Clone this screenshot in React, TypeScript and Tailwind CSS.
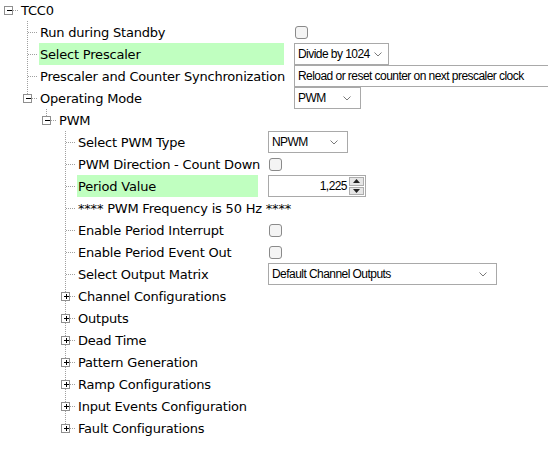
import React from 'react';

type Row = {
    level: number;
    label: string;
    kind: 'leaf' | 'open' | 'closed';
    hl?: boolean;
    ctrlX?: number;
    control?: React.ReactNode;
};

const LINE = '#a0a0a0';
const ctrlFont = { fontFamily: '"Liberation Sans", Arial, sans-serif', letterSpacing: '-0.55px' };

function Chevron() {
    return (
        <svg width="8" height="5" viewBox="0 0 8 5" className="shrink-0">
            <polyline points="0.5,0.5 4,4 7.5,0.5" fill="none" stroke="#7a7a7a" strokeWidth="1" />
        </svg>
    );
}

function Dropdown({ value, width }: { value: string; width: number }) {
    return (
        <div
            className="h-[22px] shrink-0 flex items-center justify-between gap-1 border border-[#a9a9a9] bg-white pl-[3px] pr-[9px] text-[12px] text-black"
            style={{ width, ...ctrlFont }}
        >
            <span className="whitespace-nowrap">{value}</span>
            <Chevron />
        </div>
    );
}

function Check() {
    return <div className="ml-[1px] shrink-0 w-[13px] h-[13px] rounded-[3px] border border-[#8a8a8a] bg-[#f4f4f4]" />;
}

function TextBox({ value }: { value: string }) {
    return (
        <div
            className="h-[22px] w-[300px] shrink-0 flex items-center border border-[#a9a9a9] bg-white pl-[3px] text-[12px] text-black whitespace-nowrap"
            style={ctrlFont}
        >
            {value}
        </div>
    );
}

function Spinner({ value }: { value: string }) {
    return (
        <div
            className="h-[22px] w-[98px] shrink-0 flex items-center border border-[#a9a9a9] bg-white text-[12px] text-black"
            style={ctrlFont}
        >
            <span className="flex-1 text-right pr-[2px]">{value}</span>
            <div className="flex flex-col gap-[1px] h-full py-[1px] pr-[1px]">
                {[0, 1].map((i) => (
                    <div key={i} className="w-[15px] flex-1 flex items-center justify-center bg-[#e6e6e6] border border-[#adadad]">
                        <svg width="7" height="4" viewBox="0 0 7 4">
                            <polygon points={i === 0 ? '3.5,0 7,4 0,4' : '0,0 7,0 3.5,4'} fill="#222" />
                        </svg>
                    </div>
                ))}
            </div>
        </div>
    );
}

const rows: Row[] = [
    { level: 0, label: 'TCC0', kind: 'open' },
    { level: 1, label: 'Run during Standby', kind: 'leaf', ctrlX: 294, control: <Check /> },
    { level: 1, label: 'Select Prescaler', kind: 'leaf', hl: true, ctrlX: 294, control: <Dropdown value="Divide by 1024" width={95} /> },
    { level: 1, label: 'Prescaler and Counter Synchronization', kind: 'leaf', ctrlX: 294, control: <TextBox value="Reload or reset counter on next prescaler clock" /> },
    { level: 1, label: 'Operating Mode', kind: 'open', ctrlX: 294, control: <Dropdown value="PWM" width={67} /> },
    { level: 2, label: 'PWM', kind: 'open' },
    { level: 3, label: 'Select PWM Type', kind: 'leaf', ctrlX: 268, control: <Dropdown value="NPWM" width={80} /> },
    { level: 3, label: 'PWM Direction - Count Down', kind: 'leaf', ctrlX: 268, control: <Check /> },
    { level: 3, label: 'Period Value', kind: 'leaf', hl: true, ctrlX: 268, control: <Spinner value="1,225" /> },
    { level: 3, label: '**** PWM Frequency is 50 Hz ****', kind: 'leaf' },
    { level: 3, label: 'Enable Period Interrupt', kind: 'leaf', ctrlX: 268, control: <Check /> },
    { level: 3, label: 'Enable Period Event Out', kind: 'leaf', ctrlX: 268, control: <Check /> },
    { level: 3, label: 'Select Output Matrix', kind: 'leaf', ctrlX: 268, control: <Dropdown value="Default Channel Outputs" width={229} /> },
    { level: 3, label: 'Channel Configurations', kind: 'closed' },
    { level: 3, label: 'Outputs', kind: 'closed' },
    { level: 3, label: 'Dead Time', kind: 'closed' },
    { level: 3, label: 'Pattern Generation', kind: 'closed' },
    { level: 3, label: 'Ramp Configurations', kind: 'closed' },
    { level: 3, label: 'Input Events Configuration', kind: 'closed' },
    { level: 3, label: 'Fault Configurations', kind: 'closed' },
];

// does a later sibling at this level exist before the tree climbs above it
function continues(idx: number, level: number) {
    for (let j = idx + 1; j < rows.length; j++) {
        if (rows[j].level < level) return false;
        if (rows[j].level === level) return true;
    }
    return false;
}

const cx = (level: number) => 8 + 19 * level;

function Gutter({ row, idx }: { row: Row; idx: number }) {
    const w = cx(row.level) + 12;
    const c = cx(row.level) + 0.5;
    const lines: React.ReactNode[] = [];
    for (let k = 1; k < row.level; k++) {
        if (continues(idx, k)) {
            const x = cx(k) + 0.5;
            lines.push(<line key={'a' + k} x1={x} y1={0} x2={x} y2={22} stroke={LINE} strokeDasharray="1 1" />);
        }
    }
    if (row.level > 0) {
        lines.push(
            <line key="v" x1={c} y1={0} x2={c} y2={continues(idx, row.level) ? 22 : 11} stroke={LINE} strokeDasharray="1 1" />
        );
    }
    lines.push(<line key="h" x1={c} y1={11.5} x2={w - 1} y2={11.5} stroke={LINE} strokeDasharray="1 1" />);
    return (
        <svg width={w} height={22} className="shrink-0" shapeRendering="crispEdges">
            {lines}
            {row.kind !== 'leaf' && (
                <g>
                    <rect x={c - 4} y={7.5} width={8} height={8} fill="white" stroke="#8f8f8f" />
                    <line x1={c - 2} y1={11.5} x2={c + 3} y2={11.5} stroke="#000" />
                    {row.kind === 'closed' && <line x1={c + 0.5} y1={9} x2={c + 0.5} y2={14} stroke="#000" />}
                </g>
            )}
        </svg>
    );
}

export default function App() {
    return (
        <div
            className="w-[548px] h-[458px] overflow-hidden bg-white text-black"
            style={{ fontFamily: '"DejaVu Sans", Verdana, sans-serif' }}
        >
            <div className="flex flex-col mt-[-1px]">
                {rows.map((row, idx) => {
                    const textX = cx(row.level) + 12;
                    return (
                        <div key={idx} className="h-[22px] flex items-center">
                            <Gutter row={row} idx={idx} />
                            {row.ctrlX ? (
                                <>
                                    <div
                                        className={`h-[22px] shrink-0 flex items-center pl-[1px] pt-[1px] text-[13px] whitespace-nowrap tracking-[-0.2px] ${row.hl ? 'bg-[#c0ffc0]' : ''}`}
                                        style={{ width: row.ctrlX - textX - 10 }}
                                    >
                                        {row.label}
                                    </div>
                                    <div className="ml-[10px] shrink-0 flex items-center">{row.control}</div>
                                </>
                            ) : (
                                <div className="h-[22px] shrink-0 flex items-center pl-[1px] pt-[1px] text-[13px] whitespace-nowrap tracking-[-0.2px]">
                                    {row.label}
                                </div>
                            )}
                        </div>
                    );
                })}
            </div>
        </div>
    );
}
